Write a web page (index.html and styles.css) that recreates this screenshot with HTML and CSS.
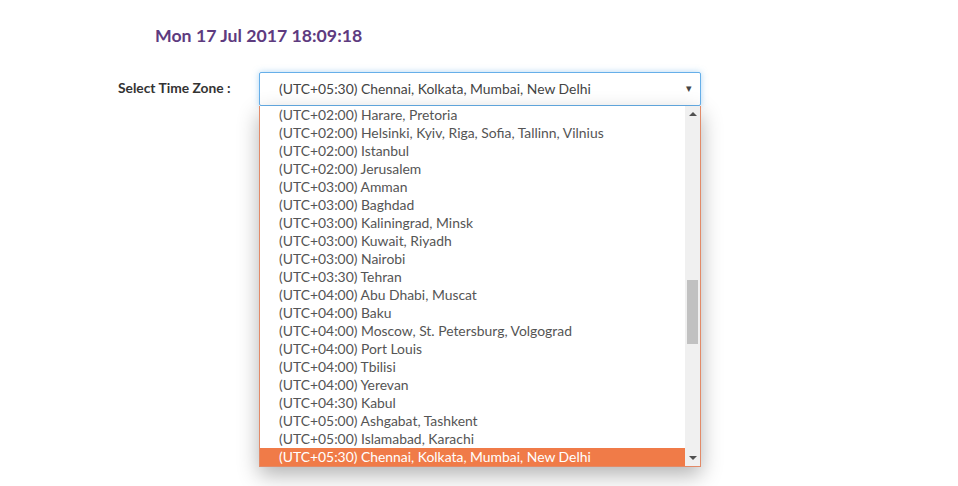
FILE: index.html
```html
<!DOCTYPE html>
<html lang="en">
<head>
    <meta charset="UTF-8">
    <title>World Clock</title>
    <link rel="stylesheet" href="styles.css">
</head>
<body>
    <section class="clock">
        <h2 class="clock-time">Mon 17 Jul 2017 18:09:18</h2>

        <div class="tz-row">
            <label class="tz-label">Select Time Zone :</label>
            <div class="tz-select">
                <div class="tz-current">
                    <span>(UTC+05:30) Chennai, Kolkata, Mumbai, New Delhi</span>
                    <span class="tz-caret">&#9662;</span>
                </div>

                <div class="tz-menu">
                    <ul class="tz-options">
                        <li>(UTC+02:00) Harare, Pretoria</li>
                        <li>(UTC+02:00) Helsinki, Kyiv, Riga, Sofia, Tallinn, Vilnius</li>
                        <li>(UTC+02:00) Istanbul</li>
                        <li>(UTC+02:00) Jerusalem</li>
                        <li>(UTC+03:00) Amman</li>
                        <li>(UTC+03:00) Baghdad</li>
                        <li>(UTC+03:00) Kaliningrad, Minsk</li>
                        <li>(UTC+03:00) Kuwait, Riyadh</li>
                        <li>(UTC+03:00) Nairobi</li>
                        <li>(UTC+03:30) Tehran</li>
                        <li>(UTC+04:00) Abu Dhabi, Muscat</li>
                        <li>(UTC+04:00) Baku</li>
                        <li>(UTC+04:00) Moscow, St. Petersburg, Volgograd</li>
                        <li>(UTC+04:00) Port Louis</li>
                        <li>(UTC+04:00) Tbilisi</li>
                        <li>(UTC+04:00) Yerevan</li>
                        <li>(UTC+04:30) Kabul</li>
                        <li>(UTC+05:00) Ashgabat, Tashkent</li>
                        <li>(UTC+05:00) Islamabad, Karachi</li>
                        <li class="selected">(UTC+05:30) Chennai, Kolkata, Mumbai, New Delhi</li>
                    </ul>
                    <div class="scrollbar">
                        <span class="arrow-up"></span>
                        <div class="track">
                            <div class="thumb"></div>
                        </div>
                        <span class="arrow-down"></span>
                    </div>
                </div>
            </div>
        </div>
    </section>
</body>
</html>
```

FILE: styles.css
```css
body {
    font-family: Lato, "Open Sans", Arial, sans-serif;
    margin: 0;
    padding: 0;
    min-height: 486px;
    background-color: #fff;
    color: #333;
}

.clock {
    padding: 24px 0 0 118px;
}

.clock-time {
    margin: 0 0 24px 37px;
    font-size: 17.7px;
    font-weight: bold;
    line-height: 24px;
    color: #5e3b7f;
}

.tz-row {
    display: flex;
    align-items: flex-start;
}

.tz-label {
    width: 141px;
    font-size: 13.8px;
    font-weight: bold;
    line-height: 34px;
    margin-top: -1px;
    color: #333;
}

.tz-select {
    width: 442px;
    display: flex;
    flex-direction: column;
}

.tz-current {
    display: flex;
    justify-content: space-between;
    align-items: center;
    height: 34px;
    box-sizing: border-box;
    padding: 0 8px 2px 19px;
    border: 1px solid #66afe9;
    border-radius: 2px;
    box-shadow: 0 0 6px rgba(102, 175, 233, 0.5);
    font-size: 13.9px;
    color: #444;
}

.tz-caret {
    font-size: 11px;
    color: #444;
}

.tz-menu {
    height: 361px;
    box-sizing: border-box;
    display: flex;
    background-color: #fff;
    border: 1px solid #e28a68;
    border-top: none;
    box-shadow: 0 8px 20px rgba(0, 0, 0, 0.3);
}

.tz-options {
    flex: 1;
    list-style: none;
    margin: 0;
    padding: 0;
    overflow: hidden;
}

.tz-options li {
    height: 18px;
    line-height: 18px;
    padding-left: 19px;
    font-size: 13.9px;
    color: #555;
    white-space: nowrap;
}

.tz-options li.selected {
    background-color: #f07b48;
    color: #fff;
}

.scrollbar {
    width: 15px;
    display: flex;
    flex-direction: column;
    align-items: center;
    background-color: #f0f0f0;
}

.arrow-up,
.arrow-down {
    width: 0;
    height: 0;
    margin: 6px 0;
    border-left: 4px solid transparent;
    border-right: 4px solid transparent;
}

.arrow-up {
    border-bottom: 4px solid #505050;
}

.arrow-down {
    border-top: 4px solid #505050;
}

.track {
    flex: 1;
    width: 100%;
    display: flex;
    flex-direction: column;
    align-items: center;
    padding-top: 158px;
}

.thumb {
    width: 11px;
    height: 64px;
    background-color: #c1c1c1;
}
```
